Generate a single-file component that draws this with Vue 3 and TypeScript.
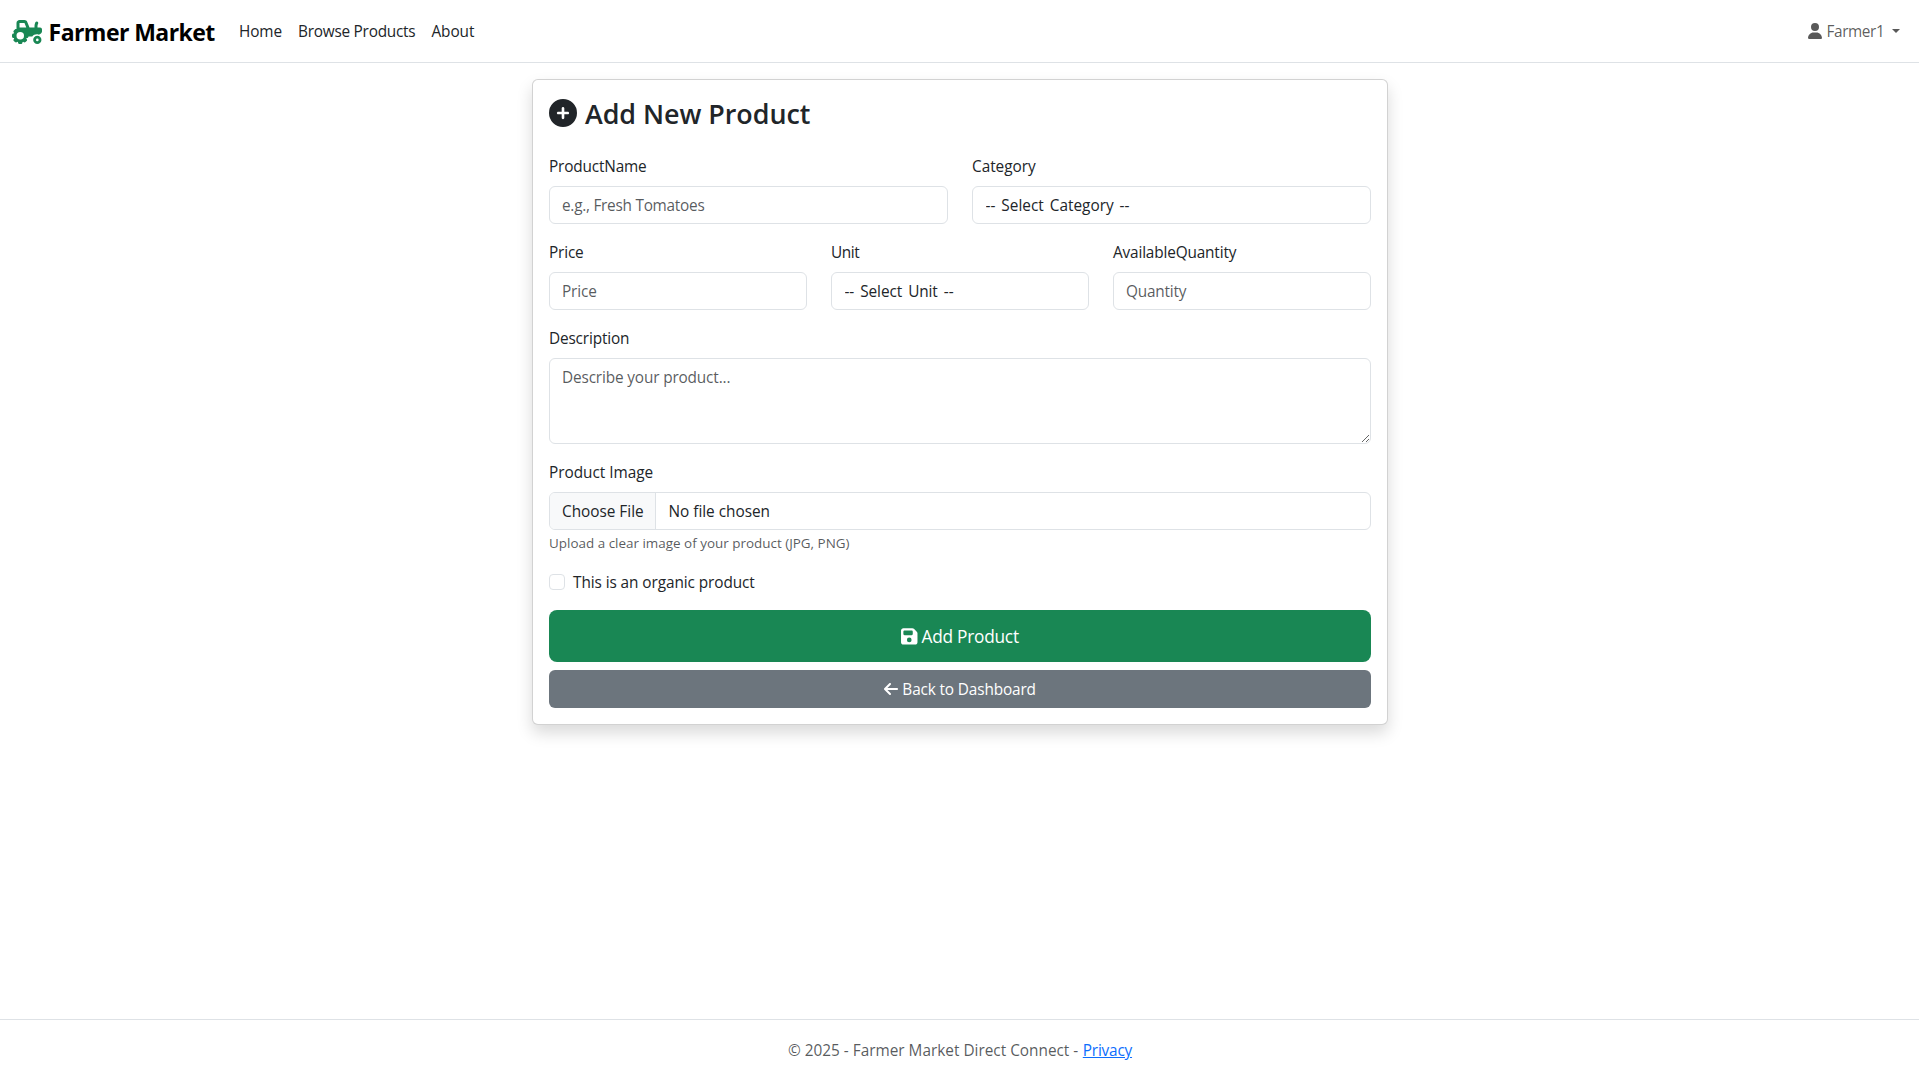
<script setup lang="ts">
import { reactive } from 'vue'

interface NavLink {
  label: string
  spacing: string
}

const navLinks: NavLink[] = [
  { label: 'Home', spacing: '-0.1px' },
  { label: 'Browse Products', spacing: '-0.24px' },
  { label: 'About', spacing: '-0.05px' },
]

const product = reactive({
  name: '',
  category: '',
  price: '',
  unit: '',
  quantity: '',
  description: '',
  organic: false,
})
</script>

<template>
  <div class="page">
    <header class="navbar">
      <a class="brand">
        <svg class="tractor" viewBox="0 0 640 512" fill="currentColor">
          <path fill-rule="evenodd" d="M96 64c0-35.300 28.700-64 64-64H266.300c26.200 0 49.700 15.900 59.400 40.200L373.700 160H480V126.200c0-24.800 5.800-49.300 16.900-71.600l2.500-5c7.900-15.800 27.100-22.200 42.900-14.300s22.200 27.100 14.300 42.900l-2.500 5c-6.700 13.300-10.100 28-10.100 42.900V160h56c22.100 0 40 17.900 40 40v45.400c0 16.500-8.500 31.900-22.600 40.700l-43.300 27.100c-14.200-5.900-29.800-9.200-46.100-9.200c-39.300 0-74.100 18.900-96 48H352c0 17.700-14.300 32-32 32h-8.200c-1.700 4.800-3.700 9.500-5.800 14.100l5.800 5.800c12.500 12.500 12.500 32.800 0 45.300l-22.600 22.600c-12.500 12.500-32.800 12.500-45.300 0l-5.800-5.800c-4.600 2.200-9.300 4.100-14.100 5.800V480c0 17.700-14.300 32-32 32H160c-17.700 0-32-14.300-32-32v-8.200c-4.800-1.700-9.500-3.700-14.100-5.800l-5.800 5.800c-12.500 12.500-32.800 12.500-45.300 0L40.200 449.100c-12.500-12.500-12.500-32.800 0-45.300l5.800-5.800c-2.200-4.600-4.100-9.300-5.800-14.100H32c-17.700 0-32-14.300-32-32V320c0-17.700 14.300-32 32-32h8.200c1.700-4.800 3.700-9.500 5.800-14.100l-5.800-5.800c-12.500-12.500-12.500-32.800 0-45.300l22.600-22.600c9-9 21.900-11.500 33.200-7.600V64zM160 64v96H304.700L266.300 64H160zM256 336a80 80 0 1 0-160 0 80 80 0 1 0 160 0z" />
          <path fill-rule="evenodd" d="M628 424a88 88 0 1 1-176 0 88 88 0 1 1 176 0zm-88 28a28 28 0 1 0 0-56 28 28 0 1 0 0 56z" />
        </svg>
        <span class="brand-name">Farmer Market</span>
      </a>
      <nav class="links">
        <a v-for="link in navLinks" :key="link.label" :style="{ letterSpacing: link.spacing }">{{ link.label }}</a>
      </nav>
      <div class="user">
        <svg class="user-icon" viewBox="0 0 448 512" fill="currentColor">
          <path d="M224 256A128 128 0 1 0 224 0a128 128 0 1 0 0 256zm-45.700 48C79.800 304 0 383.800 0 482.300C0 498.700 13.300 512 29.700 512H418.300c16.400 0 29.700-13.300 29.700-29.700C448 383.800 368.200 304 269.700 304H178.300z" />
        </svg>
        <span class="user-name">Farmer1</span>
        <i class="caret"></i>
      </div>
    </header>

    <main>
      <form class="card" @submit.prevent>
        <h2>
          <svg class="plus" viewBox="0 0 512 512" fill="currentColor">
            <path fill-rule="evenodd" d="M256 512A256 256 0 1 0 256 0a256 256 0 1 0 0 512zM232 344V280H168c-13.300 0-24-10.700-24-24s10.700-24 24-24h64V168c0-13.300 10.700-24 24-24s24 10.700 24 24v64h64c13.300 0 24 10.700 24 24s-10.700 24-24 24H280v64c0 13.300-10.700 24-24 24s-24-10.700-24-24z" />
          </svg>
          <span>Add New Product</span>
        </h2>

        <div class="row">
          <div class="field">
            <label for="name">ProductName</label>
            <input id="name" v-model="product.name" class="control name" placeholder="e.g., Fresh Tomatoes" />
          </div>
          <div class="field">
            <label for="category" class="category-label">Category</label>
            <select id="category" v-model="product.category" class="control">
              <option value="">-- Select Category --</option>
            </select>
          </div>
        </div>

        <div class="row">
          <div class="field">
            <label for="price">Price</label>
            <input id="price" v-model="product.price" class="control" placeholder="Price" />
          </div>
          <div class="field">
            <label for="unit" class="unit-label">Unit</label>
            <select id="unit" v-model="product.unit" class="control unit">
              <option value="">-- Select Unit --</option>
            </select>
          </div>
          <div class="field">
            <label for="quantity">AvailableQuantity</label>
            <input id="quantity" v-model="product.quantity" class="control quantity" placeholder="Quantity" />
          </div>
        </div>

        <div class="field block">
          <label for="description">Description</label>
          <textarea id="description" v-model="product.description" class="control" placeholder="Describe your product..."></textarea>
        </div>

        <div class="field block">
          <label class="image-label">Product Image</label>
          <div class="control file">
            <span class="choose">Choose File</span>
            <span class="chosen">No file chosen</span>
          </div>
          <small>Upload a clear image of your product (JPG, PNG)</small>
        </div>

        <label class="check">
          <input v-model="product.organic" type="checkbox" />
          <span>This is an organic product</span>
        </label>

        <button class="btn add" type="submit">
          <svg class="floppy" viewBox="0 0 448 512" fill="currentColor">
            <path fill-rule="evenodd" d="M64 32C28.700 32 0 60.700 0 96V416c0 35.300 28.700 64 64 64H384c35.300 0 64-28.700 64-64V173.300c0-17-6.700-33.300-18.700-45.300L352 50.700C340 38.700 323.700 32 306.700 32H64zm0 96c0-17.700 14.300-32 32-32H288c17.700 0 32 14.300 32 32v64c0 17.700-14.300 32-32 32H96c-17.700 0-32-14.300-32-32V128zM224 288a64 64 0 1 1 0 128 64 64 0 1 1 0-128z" />
          </svg>
          <span>Add Product</span>
        </button>
        <button class="btn back" type="button">
          <svg class="arrow" viewBox="0 0 448 512" fill="currentColor">
            <path d="M9.400 233.400c-12.500 12.500-12.500 32.800 0 45.300l160 160c12.500 12.500 32.800 12.500 45.300 0s12.500-32.800 0-45.300L109.200 288H416c17.700 0 32-14.300 32-32s-14.300-32-32-32H109.300L214.600 118.600c12.500-12.500 12.500-32.800 0-45.300s-32.800-12.500-45.300 0l-160 160z" />
          </svg>
          <span>Back to Dashboard</span>
        </button>
      </form>
    </main>

    <footer>
      <span>© 2025 - Farmer Market Direct Connect -</span>
      <a class="privacy">Privacy</a>
    </footer>
  </div>
</template>

<style>
body {
  margin: 0;
  background: #fff;
}
</style>

<style scoped>
*,
*::before,
*::after {
  box-sizing: border-box;
}

.page {
  display: flex;
  flex-direction: column;
  height: 1079px;
  overflow: hidden;
  color: #212529;
  font: 15.36px/24px 'Open Sans', 'Noto Sans', sans-serif;
}

svg {
  display: block;
  flex: none;
}

.navbar {
  display: flex;
  align-items: center;
  flex: none;
  height: 63px;
  padding: 0 19px 0 12px;
  border-bottom: 1px solid #dee2e6;
}

.brand {
  display: flex;
  align-items: center;
  width: 219px;
  padding-top: 2px;
  color: #000;
}

.tractor {
  width: 30px;
  height: 24px;
  color: #198754;
}

.brand-name {
  margin-left: 6.6px;
  font-size: 23.04px;
  font-weight: 700;
  line-height: 36px;
  letter-spacing: -0.58px;
  white-space: nowrap;
}

.links {
  display: flex;
  padding-top: 2px;
}

.links a {
  padding: 0 8px;
}

.user {
  display: flex;
  align-items: center;
  margin-left: auto;
  color: rgba(0, 0, 0, 0.65);
}

.user-icon {
  width: 14px;
  height: 16px;
}

.user-name {
  width: 65.5px;
  margin-left: 4.5px;
  padding-top: 2px;
  letter-spacing: -0.41px;
}

.caret {
  border: 4px solid transparent;
  border-top-color: currentColor;
  border-bottom: 0;
}

main {
  flex: 1;
  padding-top: 16px;
}

.card {
  width: 856px;
  margin: 0 auto;
  padding: 16px;
  background: #fff;
  border: 1px solid rgba(0, 0, 0, 0.175);
  border-radius: 6px;
  box-shadow: 0 8px 16px rgba(0, 0, 0, 0.15);
}

h2 {
  display: flex;
  align-items: center;
  height: 33.6px;
  margin: 0 0 24px;
  padding-top: 1px;
  font-size: 26.88px;
  font-weight: 600;
  line-height: 33.6px;
  letter-spacing: -0.03px;
}

.plus {
  width: 28px;
  height: 28px;
  margin-right: 8.4px;
}

.row {
  display: flex;
  gap: 24px;
  margin-bottom: 16px;
}

.row .field {
  flex: 1;
  min-width: 0;
}

.field label {
  display: block;
  margin-bottom: 7px;
  padding: 1px 0 0 0.5px;
  letter-spacing: -0.16px;
}

.field .category-label {
  letter-spacing: -0.02px;
}

.field .unit-label {
  letter-spacing: -0.4px;
}

.field .image-label {
  letter-spacing: -0.02px;
}

.control {
  display: block;
  width: 100%;
  height: 38px;
  margin: 0;
  padding: 7px 12px 5px 12.5px;
  color: #212529;
  font: inherit;
  letter-spacing: -0.15px;
  background: #fff;
  border: 1px solid #dee2e6;
  border-radius: 6px;
  outline: 0;
  appearance: none;
}

.control::placeholder {
  color: rgba(33, 37, 41, 0.75);
  opacity: 1;
}

.control.name {
  letter-spacing: -0.26px;
}

.control.quantity {
  letter-spacing: -0.2px;
}

select.control {
  padding-left: 13px;
  letter-spacing: 0;
  word-spacing: 2px;
}

select.control.unit {
  letter-spacing: -0.1px;
  word-spacing: 2.2px;
}

textarea.control {
  height: 86px;
  resize: vertical;
}

.block {
  margin-bottom: 16px;
}

.control.file {
  display: flex;
  padding: 0;
  overflow: hidden;
  letter-spacing: -0.02px;
}

.choose {
  width: 106.5px;
  padding: 7px 0 5px 12.5px;
  background: #f8f9fa;
  border-right: 1px solid #dee2e6;
}

.chosen {
  padding: 7px 12.5px 5px;
}

small {
  display: block;
  margin-top: 3.4px;
  margin-bottom: 16.6px;
  padding-left: 0.5px;
  color: rgba(33, 37, 41, 0.75);
  font-size: 13.44px;
  line-height: 21px;
}

.check {
  display: flex;
  align-items: center;
  height: 24px;
  margin: -0.5px 0 15.9px;
  letter-spacing: -0.08px;
}

.check span {
  padding-top: 1.5px;
}

.check input {
  width: 16px;
  height: 16px;
  margin: 0 8.5px 0 0;
  background: #fff;
  border: 1px solid #dee2e6;
  border-radius: 4px;
  appearance: none;
}

.btn {
  display: flex;
  align-items: center;
  justify-content: center;
  width: 100%;
  margin: 0;
  padding: 0 0 0 0.8px;
  color: #fff;
  font: inherit;
  border: 0;
}

.btn span {
  padding-top: 2px;
}

.add {
  height: 52.2px;
  margin-bottom: 8px;
  font-size: 17.28px;
  letter-spacing: -0.24px;
  background: #198754;
  border-radius: 8px;
}

.floppy {
  width: 16.5px;
  height: 18.8px;
  margin-right: 4px;
}

.back {
  height: 38px;
  letter-spacing: -0.14px;
  background: #6c757d;
  border-radius: 6px;
}

.arrow {
  width: 14px;
  height: 16px;
  margin-right: 4.4px;
}

footer {
  display: flex;
  justify-content: center;
  gap: 4.5px;
  flex: none;
  height: 60px;
  padding-left: 1px;
  color: rgba(33, 37, 41, 0.75);
  line-height: 62px;
  border-top: 1px solid #dee2e6;
}

.privacy {
  color: #0d6efd;
  letter-spacing: -0.2px;
  text-decoration: underline;
}
</style>
